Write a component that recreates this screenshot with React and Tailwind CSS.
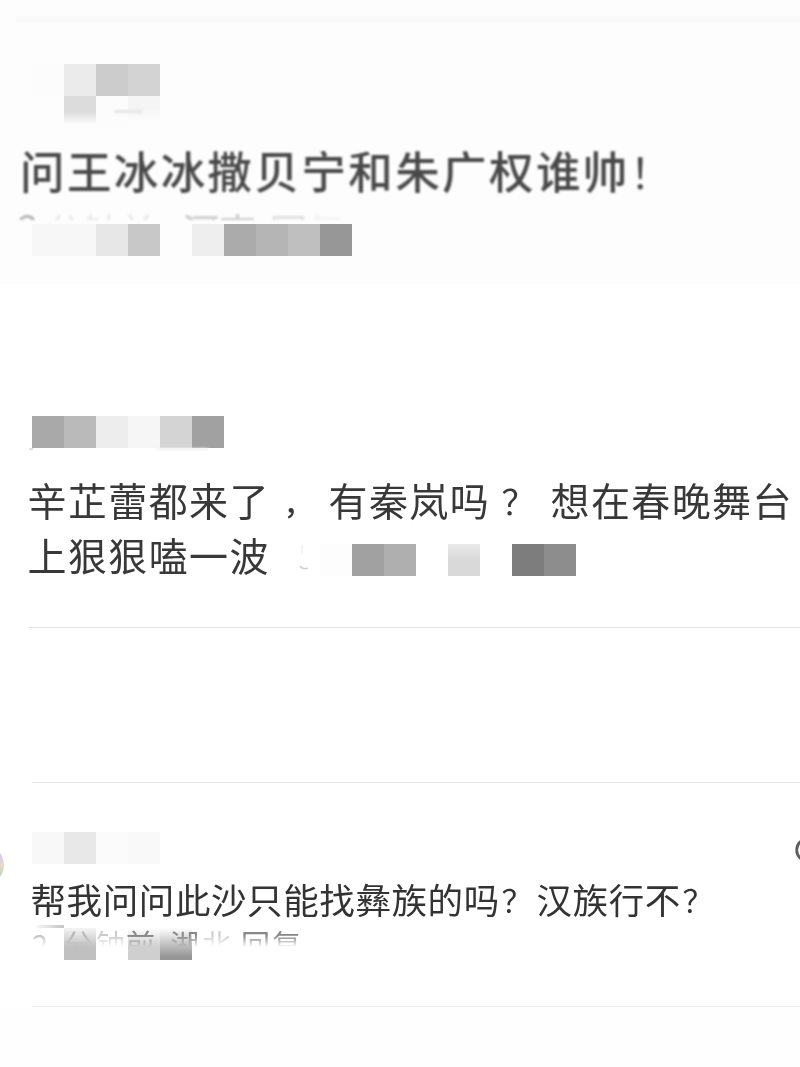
import clsx from 'clsx';

const FONT = "font-['Noto_Sans_CJK_SC',sans-serif]";

// one row of 32px mosaic tiles, null leaves a gap
function Mosaic({ tiles, className }) {
  return (
    <div className={clsx('flex', className)}>
      {tiles.map((tile, i) => (
        <div key={i} className={clsx('h-8 w-8 shrink-0', tile)} />
      ))}
    </div>
  );
}

function Divider({ className }) {
  return <div className={clsx('h-px shrink-0', className)} />;
}

export default function App() {
  return (
    <div className={clsx('relative flex h-[1067px] w-[800px] flex-col overflow-hidden bg-white', FONT)}>
      {/* First comment */}
      <section className="flex h-[284px] shrink-0 flex-col bg-[#fdfdfd]">
        <div className="mt-4 ml-4 h-[6px] shrink-0 bg-[#fafafa]" />
        <div className="relative mt-[42px] ml-8 h-[81px] shrink-0">
          <Mosaic tiles={['bg-[#fcfcfc]', 'bg-[#ebebeb]', 'bg-[#cccccc]', 'bg-[#d3d3d3]']} />
          <Mosaic
            tiles={[
              null,
              'bg-linear-to-b from-[#dcdcdc] from-50% to-[#fdfdfd] to-90%',
              'bg-[#fcfcfc]',
              'bg-linear-to-b from-[#f5f5f5] from-40% to-[#fdfdfd] to-80%',
            ]}
          />
          <div className="absolute top-[46px] left-[82px] h-[3px] w-[29px] rounded-full bg-[#e6e6e6] blur-[1px]" />
        </div>
        <p className="ml-[20px] h-12 shrink-0 text-[44.5px] leading-[49px] font-medium tracking-[2.4px] whitespace-nowrap text-[#484848] blur-[0.8px]">
          问王冰冰撒贝宁和朱广权谁帅<span className="text-[42px] font-normal">！</span>
        </p>
        <div className="mt-[18px] ml-[18px] flex h-[9px] shrink-0 overflow-hidden text-[37px] leading-[38px] whitespace-nowrap text-[#cccccc] blur-[0.8px]">
          <span className="-mt-[5px] w-[28px] text-[#b4b4b4]">2</span>
          <span className="w-[136px] text-[#e8e8e8]">分钟前</span>
          <span className="w-[88px]">河南</span>
          <span className="text-[#dedede]">回</span>
          <span className="text-[#f3f3f3]">复</span>
        </div>
        <Mosaic
          className="mt-1 ml-8"
          tiles={[
            'bg-[#f7f7f7]', 'bg-[#f7f7f7]', 'bg-[#e7e7e7]', 'bg-[#c8c8c8]', null,
            'bg-[#eeeeee]', 'bg-[#ababab]', 'bg-[#b5b5b5]', 'bg-[#bfbfbf]', 'bg-[#979797]',
          ]}
        />
      </section>

      {/* Second comment */}
      <section className="flex h-[343px] shrink-0 flex-col pt-[132px]">
        <div className="relative ml-8">
          <Mosaic
            tiles={[
              'bg-[#a9a9a9]', 'bg-[#bababa]', 'bg-[#ededed]',
              'bg-[#f6f6f6]', 'bg-[#d4d4d4]', 'bg-[#a1a1a1]',
            ]}
          />
          <div className="absolute top-8 left-[124px] h-[2px] w-[52px] bg-[#f0f0f0] blur-[1px]" />
          <div className="absolute top-8 -left-[3px] h-[2px] w-1 bg-[#dddddd] blur-[0.5px]" />
        </div>
        <div className="mt-[24px] ml-[27.5px] flex h-[55px] shrink-0 text-[39px] leading-[55px] tracking-[1.4px] whitespace-nowrap text-[#383838] blur-[0.3px]">
          <span className="w-[256px]">辛芷蕾都来了</span>
          <span className="w-[45px] pt-[3px] text-[29px] font-medium">，</span>
          <span className="w-[173px]">有秦岚吗</span>
          <span className="w-[49px] pt-px text-[34px]">？</span>
          <span>想在春晚舞台</span>
        </div>
        <div className="flex h-[55px] shrink-0 items-center">
          <p className="ml-[27.5px] w-[270.5px] text-[39px] leading-[55px] tracking-[1.4px] whitespace-nowrap text-[#383838] blur-[0.3px]">
            上狠狠嗑一波
          </p>
          <svg className="w-[22px] shrink-0 blur-[0.5px]" height="32" viewBox="0 0 22 32" fill="none">
            <path d="M4 6v10" stroke="#f0f0f0" strokeWidth="1.5" />
            <path d="M2 27c2 3 5 3 8 2" stroke="#d2d2d2" strokeWidth="1.8" />
          </svg>
          <Mosaic
            className="mt-[11px]"
            tiles={[
              'bg-[#fdfdfd]', 'bg-[#a1a1a1]', 'bg-[#afafaf]', null,
              'bg-linear-to-b from-[#e9e9e9] to-[#d9d9d9] to-50%', null,
              'bg-[#7d7d7d]', 'bg-[#8d8d8d]',
            ]}
          />
        </div>
      </section>
      <Divider className="ml-7 bg-[#e3e3e3]" />

      {/* Third comment */}
      <div className="h-[154px] shrink-0" />
      <Divider className="ml-8 bg-[#e9e9e9]" />
      <section className="relative flex h-[223px] shrink-0 flex-col pt-[49px]">
        <Mosaic
          className="ml-8"
          tiles={['bg-[#f8f8f8]', 'bg-[#e8e8e8]', 'bg-[#fbfbfb]', 'bg-[#f9f9f9]']}
        />
        <div className="mt-[15px] ml-[30.5px] flex h-10 shrink-0 text-[35.5px] leading-10 tracking-[0.6px] whitespace-nowrap text-[#333333] blur-[0.3px]">
          <span className="w-[471px]">帮我问问此沙只能找彝族的吗</span>
          <span className="w-[35px] text-[31px]">？</span>
          <span className="w-[146px]">汉族行不</span>
          <span className="text-[31px]">？</span>
        </div>
        <div className="relative mt-[9px] ml-8 h-8 shrink-0">
          <div className="absolute -top-[3px] left-1 h-[3px] w-7 rounded-tl-full bg-linear-to-r from-[#f8f8f8] to-[#c4c4c4] blur-[0.5px]" />
          <div className="absolute left-8 h-8 w-8 bg-linear-to-b from-[#f4f4f4] to-[#c0c0c0] to-60%" />
          <div className="absolute left-24 h-8 w-8 bg-linear-to-b from-white to-[#cfcfcf] to-60%" />
          <div className="absolute left-32 h-8 w-8 bg-linear-to-b from-white to-[#969696] to-90%" />
          <div className="flex h-[19px] overflow-hidden text-[29px] leading-[30px] tracking-[2px] whitespace-nowrap text-[#888888] mask-b-from-40% mask-b-to-100%">
            <span className="relative w-[32px] text-[#c4c4c4]">2</span>
            <span className="relative w-[32px] text-[#b8b8b8]">分</span>
            <span className="relative w-[30px] text-[#cccccc]">钟</span>
            <span className="relative w-[44px]">前</span>
            <span className="relative w-[32px]">湖</span>
            <span className="relative w-[39px] text-[#d0d0d0]">北</span>
            <span className="relative">回复</span>
          </div>
        </div>

        {/* avatar and like button, both cut by the screen edge */}
        <div className="absolute top-[63px] -left-[34px] h-[38px] w-[38px] rounded-full bg-linear-to-b from-[#d4c0f0] from-20% via-[#e6dccc] to-[#bcd4b0] to-80%" />
        <svg className="absolute top-[54px] left-[795px] blur-[0.4px]" width="26" height="26" viewBox="0 0 26 26" fill="none">
          <circle cx="13" cy="13" r="11.3" stroke="#5c5c5c" strokeWidth="2.8" />
        </svg>
      </section>
      <Divider className="ml-8 bg-[#ececec]" />
      <div className="grow bg-[#fefefe]" />
    </div>
  );
}
